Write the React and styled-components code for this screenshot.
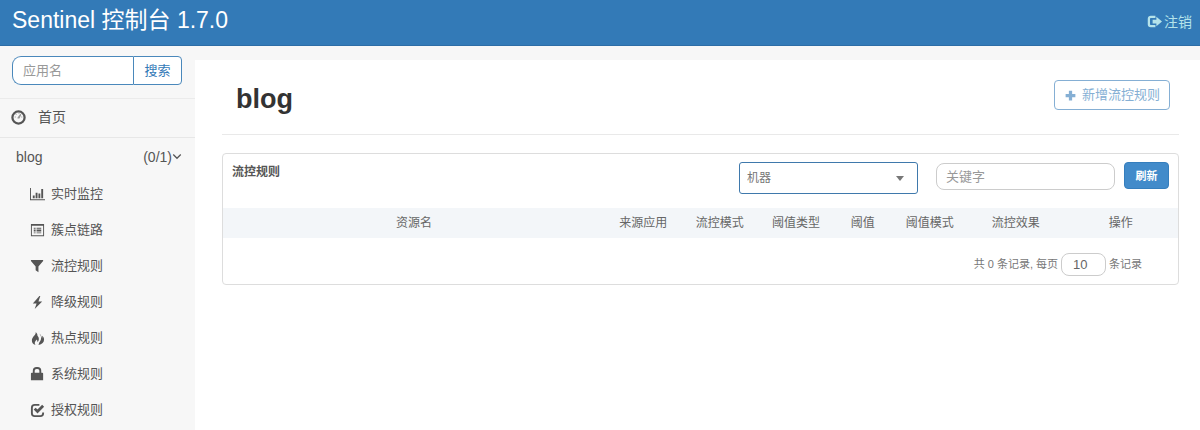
import React from "react";
import styled, { createGlobalStyle } from "styled-components";

const GlobalStyle = createGlobalStyle`
  *, *::before, *::after { box-sizing: border-box; }
  body {
    margin: 0;
    background: #fff;
    color: #555;
    font: 13px/20px "Liberation Sans", "Noto Sans CJK SC", sans-serif;
  }
  button, input, select { font: inherit; margin: 0; }
  input::placeholder { color: #999; opacity: 1; }
`;

const Page = styled.div`
  display: flex;
  flex-direction: column;
  min-height: 100vh;
`;

const TopBar = styled.header`
  display: flex;
  align-items: center;
  justify-content: space-between;
  height: 46px;
  padding: 0 8px 6px 12px;
  background: #337ab7;
  border-bottom: 1px solid #2d6da6;
`;

const Brand = styled.a`
  color: #fff;
  font-size: 23px;
  line-height: 32px;
  text-decoration: none;
`;

const Logout = styled.a`
  display: flex;
  align-items: center;
  gap: 2px;
  padding-top: 4px;
  color: #b5e3ea;
  font-size: 14px;
  text-decoration: none;
`;

const Body = styled.div`
  display: flex;
  flex: 1;
  background: #f7f7f7;
`;

const Sidebar = styled.nav`
  flex: none;
  width: 195px;
`;

const Search = styled.form`
  display: flex;
  height: 53px;
  padding: 10px 13px 13px 12px;
  border-bottom: 1px solid #ebebeb;
`;

const SearchInput = styled.input`
  flex: 1;
  min-width: 0;
  padding: 0 10px;
  color: #555;
  background: #fff;
  border: 1px solid #4a88bb;
  border-right: 0;
  border-radius: 9px 0 0 9px;
`;

const SearchButton = styled.button`
  width: 49px;
  padding: 0;
  color: #337ab7;
  background: #fff;
  border: 1px solid #4a88bb;
  border-radius: 0 4px 4px 0;
`;

const HomeLink = styled.a`
  display: flex;
  align-items: center;
  gap: 12px;
  height: 39px;
  padding: 0 11px 2px;
  color: #555;
  font-size: 14px;
  text-decoration: none;
  border-bottom: 1px solid #e7e7e7;
`;

const AppToggle = styled.button`
  display: flex;
  align-items: center;
  width: 100%;
  height: 38px;
  padding: 0 13px 0 16px;
  color: #555;
  font-size: 14px;
  background: none;
  border: 0;
`;

const AppName = styled.span`
  flex: 1;
  text-align: left;
`;

const Menu = styled.ul`
  margin: 0;
  padding: 0;
  list-style: none;
`;

const MenuLink = styled.a`
  display: flex;
  align-items: center;
  gap: 6px;
  height: 36px;
  padding-left: 30px;
  color: #555;
  text-decoration: none;
`;

const Icon = styled.svg`
  flex: none;
  width: ${(p) => p.$size || 15}px;
  height: ${(p) => p.$size || 15}px;
  fill: currentColor;
`;

const Main = styled.main`
  flex: 1;
  min-width: 0;
  margin-top: 14px;
  padding: 0 21px 24px 27px;
  background: #fff;
`;

const TitleRow = styled.div`
  display: flex;
  align-items: flex-start;
  justify-content: space-between;
  height: 75px;
  padding: 20px 9px 0 14px;
  border-bottom: 1px solid #e9e9e9;
`;

const Title = styled.h1`
  margin: 0;
  color: #333;
  font-size: 27px;
  line-height: 38px;
`;

const AddButton = styled.button`
  display: flex;
  align-items: center;
  gap: 5px;
  height: 30px;
  padding: 0 9px;
  color: #85afd4;
  background: #fff;
  border: 1px solid #85afd4;
  border-radius: 4px;
`;

const Panel = styled.section`
  margin-top: 18px;
  background: #fff;
  border: 1px solid #ddd;
  border-radius: 4px;
`;

const PanelBar = styled.div`
  display: flex;
  align-items: flex-start;
  height: 54px;
  padding: 8px 9px;
`;

const PanelTitle = styled.h2`
  flex: 1;
  margin: 0;
  color: #555;
  font-size: 12px;
  line-height: 20px;
`;

const SelectBox = styled.div`
  position: relative;
  width: 179px;
  margin-right: 18px;
`;

const Select = styled.select`
  display: block;
  width: 100%;
  height: 32px;
  padding: 0 28px 0 7px;
  color: #777;
  font-size: 12px;
  background: #fff;
  border: 1px solid #3f79ac;
  border-radius: 3px;
  appearance: none;
`;

const Caret = styled.span`
  position: absolute;
  top: 14px;
  right: 14px;
  border: 4px solid transparent;
  border-top: 5px solid #777;
  border-bottom: 0;
  pointer-events: none;
`;

const KeywordInput = styled.input`
  width: 179px;
  height: 27px;
  margin-top: 1px;
  margin-right: 9px;
  padding: 0 9px;
  color: #555;
  background: #fff;
  border: 1px solid #ccc;
  border-radius: 8px;
`;

const RefreshButton = styled.button`
  width: 45px;
  height: 27px;
  padding: 0;
  color: #fff;
  font-size: 11px;
  font-weight: 700;
  background: #428bca;
  border: 1px solid #357ebd;
  border-radius: 4px;
`;

const RuleTable = styled.table`
  width: 100%;
  table-layout: fixed;
  border-collapse: collapse;
`;

const HeadCell = styled.th`
  width: ${(p) => p.$width};
  height: 30px;
  padding: 0;
  color: #666;
  font-size: 12px;
  font-weight: 400;
  background: #f3f6f9;
`;

const Footer = styled.div`
  display: flex;
  align-items: center;
  justify-content: flex-end;
  gap: 3px;
  height: 46px;
  padding: 6px 36px 0 0;
  color: #777;
  font-size: 11px;
`;

const PageSize = styled.input`
  width: 45px;
  height: 23px;
  padding: 0 11px;
  color: #666;
  font-size: 13px;
  background: #fff;
  border: 1px solid #ccc;
  border-radius: 8px;
`;

const glyphs = {
  chart: <path d="M0 1h1v12h15v1H0zM3 9h2v3H3zM6 6h2v6H6zM9 7h2v5H9zM12 2h2v10h-2z" />,
  list: (
    <path
      fillRule="evenodd"
      d="M1 1h14v13H1zM2 3v10h12V3zM4 5h2v1H4zM7 5h5v1H7zM4 7h2v2H4zM7 7h5v2H7zM4 10h2v1H4zM7 10h5v1H7z"
    />
  ),
  filter: <path d="M1 1h13v1L9 8v6l-3-2V8L1 2z" />,
  bolt: <path d="M10 1 3 9h4l-2 6 8-8H9l2-6z" />,
  fire: (
    <path d="M6 1c1 3-4 5-4 9 0 2 1 4 4 5-2-3 0-4 1-6 1 1 1 2 1 3 2-2 2-5 0-7 0-2-1-3-2-4zM10 3c3 3 2 7 0 9l-1 3c4-1 6-3 6-6 0-2-1-3-2-4v3c-1-2-1-4-3-5z" />
  ),
  lock: (
    <path
      fillRule="evenodd"
      d="M3 6V4a4 4 0 0 1 4-4h1a4 4 0 0 1 4 4v2h1a1 1 0 0 1 1 1v7H1V7a1 1 0 0 1 1-1zM5 6h5V4a2 2 0 0 0-2-2H7a2 2 0 0 0-2 2z"
    />
  ),
  check: (
    <>
      <path
        d="M10 2H5a3 3 0 0 0-3 3v6a3 3 0 0 0 3 3h6a3 3 0 0 0 3-3v-1"
        fill="none"
        stroke="currentColor"
        strokeWidth="2"
      />
      <path d="m5 6 3 3 6-6" fill="none" stroke="currentColor" strokeWidth="3" />
    </>
  ),
  dashboard: (
    <>
      <circle cx="8" cy="8" r="6.5" fill="none" stroke="currentColor" strokeWidth="2.4" />
      <path d="M4 7h1v1H4zM5 4h1v1H5zM8 3h1v1H8zM11 7h1v1h-1zM10 4l1 1-2 4H7V8z" opacity=".6" />
    </>
  ),
  logout: (
    <>
      <path
        d="M9 3H4a2 2 0 0 0-2 2v6a2 2 0 0 0 2 2h5"
        fill="none"
        stroke="currentColor"
        strokeWidth="2.4"
      />
      <path d="M10 3l6 5-6 5v-3H6V6h4z" />
    </>
  ),
  plus: <path d="M6 2h4v4h4v4h-4v4H6v-4H2V6h4z" />,
  chevron: <path d="m2 4 6 6 6-6" fill="none" stroke="currentColor" strokeWidth="2" />,
};

const Glyph = ({ name, size }) => (
  <Icon viewBox="0 0 16 16" $size={size} aria-hidden="true">
    {glyphs[name]}
  </Icon>
);

const menu = [
  ["chart", "实时监控"],
  ["list", "簇点链路"],
  ["filter", "流控规则"],
  ["bolt", "降级规则"],
  ["fire", "热点规则"],
  ["lock", "系统规则"],
  ["check", "授权规则"],
];

const columns = [
  ["资源名", "auto"],
  ["来源应用", "8%"],
  ["流控模式", "8%"],
  ["阈值类型", "8%"],
  ["阈值", "6%"],
  ["阈值模式", "8%"],
  ["流控效果", "10%"],
  ["操作", "12%"],
];

export default function App() {
  return (
    <Page>
      <GlobalStyle />
      <TopBar>
        <Brand href="#">Sentinel 控制台 1.7.0</Brand>
        <Logout href="#logout">
          <Glyph name="logout" />
          注销
        </Logout>
      </TopBar>
      <Body>
        <Sidebar>
          <Search onSubmit={(e) => e.preventDefault()}>
            <SearchInput placeholder="应用名" aria-label="应用名" />
            <SearchButton type="submit">搜索</SearchButton>
          </Search>
          <HomeLink href="#home">
            <Glyph name="dashboard" />
            首页
          </HomeLink>
          <AppToggle type="button" aria-expanded="true">
            <AppName>blog</AppName>
            (0/1)
            <Glyph name="chevron" size={10} />
          </AppToggle>
          <Menu>
            {menu.map(([icon, label]) => (
              <li key={label}>
                <MenuLink href={`#${icon}`}>
                  <Glyph name={icon} />
                  {label}
                </MenuLink>
              </li>
            ))}
          </Menu>
        </Sidebar>
        <Main>
          <TitleRow>
            <Title>blog</Title>
            <AddButton type="button">
              <Glyph name="plus" size={13} />
              新增流控规则
            </AddButton>
          </TitleRow>
          <Panel>
            <PanelBar>
              <PanelTitle>流控规则</PanelTitle>
              <SelectBox>
                <Select aria-label="机器">
                  <option>机器</option>
                </Select>
                <Caret />
              </SelectBox>
              <KeywordInput placeholder="关键字" aria-label="关键字" />
              <RefreshButton type="button">刷新</RefreshButton>
            </PanelBar>
            <RuleTable>
              <thead>
                <tr>
                  {columns.map(([label, width]) => (
                    <HeadCell key={label} scope="col" $width={width}>
                      {label}
                    </HeadCell>
                  ))}
                </tr>
              </thead>
            </RuleTable>
            <Footer>
              <label htmlFor="page-size">共 0 条记录, 每页</label>
              <PageSize id="page-size" defaultValue="10" inputMode="numeric" />
              <span>条记录</span>
            </Footer>
          </Panel>
        </Main>
      </Body>
    </Page>
  );
}
